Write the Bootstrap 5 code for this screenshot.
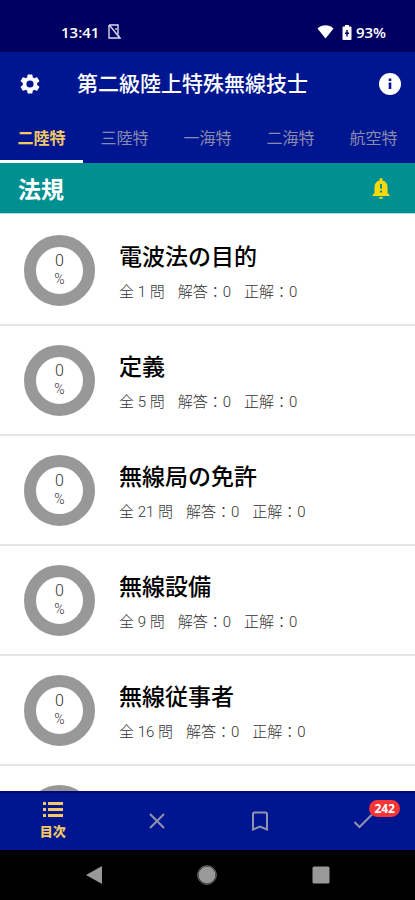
<!DOCTYPE html>
<html lang="ja">
<head>
<meta charset="utf-8">
<meta name="viewport" content="width=device-width, initial-scale=1">
<title>第二級陸上特殊無線技士</title>
<link href="https://cdn.jsdelivr.net/npm/bootstrap@5.3.0/dist/css/bootstrap.min.css" rel="stylesheet">
<style>
body { font-family: Roboto, "Noto Sans CJK JP", sans-serif; color: #000; background: #fff; }
svg { display: block; }
.status-bar { height: 52px; padding: 12px 29px 0 61px; background: #000060; font: 600 15px/20px "Open Sans", sans-serif; }
.app-head { background: #001690; }
.title-bar { height: 63px; padding: 0 13px 0 18px; }
.title-bar h1 { font-size: 21px; line-height: 30px; font-weight: 500; margin: 0 0 0 35px; }
.icon-btn { border: 0; padding: 0; background: none; color: inherit; }
.topic-tabs { height: 48px; font-size: 16px; flex-wrap: nowrap; }
.topic-tabs .nav-link { height: 48px; padding: 0; line-height: 48px; color: #8b8aad; border-bottom: 3px solid transparent; border-radius: 0; white-space: nowrap; }
.topic-tabs .nav-link.active { color: #f4c865; border-color: #fff; font-weight: 700; }
.section-bar { height: 51px; padding: 0 22px 0 18px; background: #009092; border-bottom: 1px solid #b5dada; }
.section-bar h2 { font-size: 23px; line-height: 34px; font-weight: 700; margin: 0; padding-top: 5px; }
.topic-list { padding-top: 2px; }
.topic { height: 110px; padding: 0 24px; gap: 24px; border-bottom: 2px solid #e6e6e6; color: #000; flex-shrink: 0; }
.topic h3 { font-size: 23px; line-height: 34px; font-weight: 500; margin: 0; padding: 4px 0 6px; }
.ring { width: 71px; height: 71px; border: 12px solid #989898; border-radius: 50%; font-size: 16px; line-height: 18px; font-weight: 300; color: #333; flex-shrink: 0; }
.ring small { font-size: 14px; }
.counts { gap: 13px; font-size: 15px; line-height: 22px; font-weight: 300; color: #333; white-space: nowrap; }
.bottom-tabs { height: 59px; background: #001690; border-top: 2px solid #000b70; }
.bottom-tabs .nav-link { height: 55px; padding: 0; color: #9292ab; font-size: 13px; line-height: 18px; font-weight: 900; }
.bottom-tabs .nav-link.active { color: #f4c865; gap: 3px; }
.count-badge { position: absolute; left: 18px; top: -9px; padding: 0 5px; border-radius: 9px; background: #fa3535; color: #fff; font: 700 12px/17px "Open Sans", sans-serif; }
.system-nav { height: 50px; background: #000; color: #999; padding: 0 38px; }
.system-nav button { width: 33%; }
</style>
<script src="https://cdn.jsdelivr.net/npm/bootstrap@5.3.0/dist/js/bootstrap.bundle.min.js"></script>
</head>
<body>
<div class="d-flex flex-column vh-100 overflow-hidden">
  <div class="status-bar d-flex align-items-center justify-content-between text-white flex-shrink-0">
    <div class="d-flex align-items-center gap-2"><span>13:41</span>
      <svg width="15" height="16" viewBox="0 0 15 16" fill="none" stroke="#d8d8f0" stroke-width="1.4"><path d="M2 1h9v9M2 1v13h8M4 3l8 10M2 1l2 2M9 4v2M10 14h3l-2-3"/></svg>
    </div>
    <div class="d-flex align-items-center">
      <svg width="17" height="14" viewBox="0 0 17 14" fill="#fff"><path d="M.5 3.500C5-.8 12-.8 16.500 3.500L8.500 13.500z"/></svg>
      <svg class="mx-1 ps-1" width="14" height="15" viewBox="0 0 10 15"><path fill="#fff" d="M3 0h4v1.500h1.500q1 0 1 1V14q0 1-1 1h-7q-1 0-1-1V2.500q0-1 1-1H3z"/><path fill="#000060" d="M4.300 5h1.400v2.500H7v1.400H5.700v2.500H4.300V8.900H3V7.500h1.300z"/></svg>
      <span>93%</span>
    </div>
  </div>

  <header class="app-head text-white flex-shrink-0">
    <div class="title-bar d-flex align-items-center">
      <button class="icon-btn" aria-label="設定"><svg width="24" height="24" viewBox="0 0 24 24" fill="currentColor"><path d="M19.140 12.940c.04-.3.06-.61.06-.94s-.02-.64-.07-.94l2.030-1.580a.49.49 0 0 0 .12-.61l-1.920-3.320a.49.49 0 0 0-.59-.22l-2.390.96a7 7 0 0 0-1.620-.94l-.36-2.540a.48.48 0 0 0-.48-.41h-3.840a.48.48 0 0 0-.47.41l-.36 2.540c-.59.24-1.130.57-1.620.94l-2.390-.96a.48.48 0 0 0-.59.22L2.740 8.870a.48.48 0 0 0 .12.610l2.030 1.580c-.05.3-.09.63-.09.94s.02.64.07.94l-2.030 1.580a.49.49 0 0 0-.12.610l1.920 3.320c.12.22.37.29.59.22l2.390-.96c.5.38 1.030.7 1.620.94l.36 2.540c.05.24.24.41.48.41h3.840c.24 0 .44-.17.47-.41l.36-2.540c.59-.24 1.130-.56 1.620-.94l2.390.96c.22.08.47 0 .59-.22l1.920-3.320a.48.48 0 0 0-.12-.61zM12 15.600a3.600 3.600 0 1 1 0-7.200 3.600 3.600 0 0 1 0 7.200z"/></svg></button>
      <h1 class="flex-grow-1">第二級陸上特殊無線技士</h1>
      <button class="icon-btn" aria-label="情報"><svg width="24" height="24" viewBox="0 0 24 24"><circle cx="12" cy="12" r="11" fill="#fff"/><path d="M10.700 6.500h2.600v2.600h-2.600zM10.700 10.500h2.600V17h-2.600z" fill="#001690"/></svg></button>
    </div>
    <nav class="nav nav-fill topic-tabs text-center">
      <a class="nav-link col active" aria-current="page" href="#">二陸特</a>
      <a class="nav-link col" href="#">三陸特</a>
      <a class="nav-link col" href="#">一海特</a>
      <a class="nav-link col" href="#">二海特</a>
      <a class="nav-link col" href="#">航空特</a>
    </nav>
  </header>

  <div class="section-bar d-flex align-items-center justify-content-between text-white flex-shrink-0">
    <h2>法規</h2>
    <button class="icon-btn" aria-label="お知らせ"><svg width="24" height="24" viewBox="0 0 24 24"><path fill="#fcd90e" d="M12 23a2 2 0 0 0 2-2h-4a2 2 0 0 0 2 2zm6.500-6v-6c0-3.300-2-5.700-5-6.400V3.500a1.500 1.500 0 0 0-3 0v1.100c-3 .7-5 3.100-5 6.400v6l-2 2v1h17v-1z"/><path fill="#009092" d="M11 8h2v4.500h-2zM11 14.500h2v2h-2z"/></svg></button>
  </div>

  <main class="topic-list d-flex flex-column flex-grow-1 overflow-hidden">
    <a href="#" class="topic d-flex align-items-center text-decoration-none">
      <div class="ring d-flex flex-column align-items-center justify-content-center"><span>0</span><small>%</small></div>
      <div><h3>電波法の目的</h3><div class="counts d-flex"><span>全 1 問</span><span>解答：0</span><span>正解：0</span></div></div>
    </a>
    <a href="#" class="topic d-flex align-items-center text-decoration-none">
      <div class="ring d-flex flex-column align-items-center justify-content-center"><span>0</span><small>%</small></div>
      <div><h3>定義</h3><div class="counts d-flex"><span>全 5 問</span><span>解答：0</span><span>正解：0</span></div></div>
    </a>
    <a href="#" class="topic d-flex align-items-center text-decoration-none">
      <div class="ring d-flex flex-column align-items-center justify-content-center"><span>0</span><small>%</small></div>
      <div><h3>無線局の免許</h3><div class="counts d-flex"><span>全 21 問</span><span>解答：0</span><span>正解：0</span></div></div>
    </a>
    <a href="#" class="topic d-flex align-items-center text-decoration-none">
      <div class="ring d-flex flex-column align-items-center justify-content-center"><span>0</span><small>%</small></div>
      <div><h3>無線設備</h3><div class="counts d-flex"><span>全 9 問</span><span>解答：0</span><span>正解：0</span></div></div>
    </a>
    <a href="#" class="topic d-flex align-items-center text-decoration-none">
      <div class="ring d-flex flex-column align-items-center justify-content-center"><span>0</span><small>%</small></div>
      <div><h3>無線従事者</h3><div class="counts d-flex"><span>全 16 問</span><span>解答：0</span><span>正解：0</span></div></div>
    </a>
    <a href="#" class="topic d-flex align-items-center" aria-label="次の項目">
      <div class="ring"></div>
    </a>
  </main>

  <nav class="nav nav-fill bottom-tabs flex-nowrap flex-shrink-0">
    <a href="#" class="nav-link col active d-flex flex-column align-items-center justify-content-center" aria-current="page">
      <svg width="20" height="20" viewBox="0 0 20 20" fill="currentColor"><path d="M0 2h3v3H0zM5 2h15v3H5zM0 8h3v3H0zM5 8h15v3H5zM0 14h3v3H0zM5 14h15v3H5z"/></svg>
      <span>目次</span>
    </a>
    <a href="#" class="nav-link col d-flex align-items-center justify-content-center" aria-label="不正解">
      <svg width="24" height="24" viewBox="0 0 24 24" fill="none" stroke="currentColor" stroke-width="2"><path d="M5 5l14 14M19 5L5 19"/></svg>
    </a>
    <a href="#" class="nav-link col d-flex align-items-center justify-content-center" aria-label="ブックマーク">
      <svg width="24" height="24" viewBox="0 0 24 24" fill="none" stroke="currentColor" stroke-width="2"><path d="M5 20.500V5q0-1.500 1.500-1.500h11Q19 3.500 19 5v15.500l-7-3z"/></svg>
    </a>
    <a href="#" class="nav-link col d-flex align-items-center justify-content-center" aria-label="正解">
      <span class="position-relative"><svg width="24" height="24" viewBox="0 0 24 24" fill="none" stroke="currentColor" stroke-width="2"><path d="M3.500 13l5 5L21 5.500"/></svg><span class="count-badge">242</span></span>
    </a>
  </nav>

  <div class="system-nav d-flex align-items-center justify-content-between flex-shrink-0">
    <button class="icon-btn d-flex justify-content-center" aria-label="戻る"><svg width="18" height="20" viewBox="0 0 18 20" fill="currentColor"><path d="M17 1v18L1 10z"/></svg></button>
    <button class="icon-btn d-flex justify-content-center" aria-label="ホーム"><svg width="20" height="20" viewBox="0 0 20 20"><circle cx="10" cy="10" r="9.300" fill="none" stroke="#777"/><circle cx="10" cy="10" r="8.500" fill="currentColor"/></svg></button>
    <button class="icon-btn d-flex justify-content-center" aria-label="履歴"><svg width="18" height="18" viewBox="0 0 18 18"><rect x=".5" y=".5" width="17" height="17" rx="1.500" fill="currentColor"/></svg></button>
  </div>
</div>
</body>
</html>
